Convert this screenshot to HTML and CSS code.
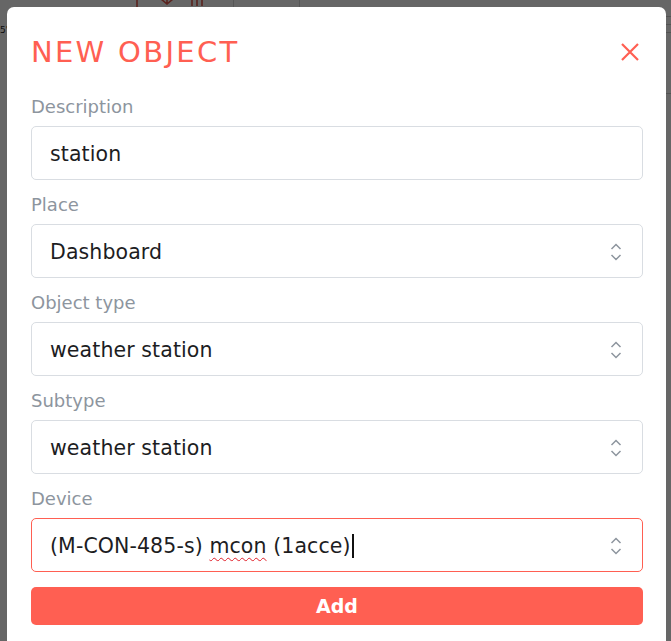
FILE: index.html
```html
<!DOCTYPE html>
<html lang="en">
<head>
<meta charset="utf-8">
<title>New object</title>
<link rel="stylesheet" href="styles.css">
</head>
<body>
<div class="page">
  <div class="toolbar">
    <div class="tb-icons">
      <svg width="14" height="16" viewBox="0 0 14 16"><path d="M7 0 V14 M1 5 L7 0 L13 5" stroke="#e0584c" stroke-width="1.6" fill="none"/></svg>
      <svg width="14" height="16" viewBox="0 0 14 16"><path d="M7 -2 V10 M1 5 L7 10 L13 5 M1 14 H13" stroke="#e0584c" stroke-width="1.6" fill="none"/></svg>
      <svg width="14" height="16" viewBox="0 0 14 16"><path d="M2 0 V12 M7 0 V12 M12 0 V12" stroke="#e0584c" stroke-width="1.6" fill="none"/></svg>
    </div>
    <div class="tb-cell"></div>
    <div class="tb-cell wide"></div>
  </div>
  <div class="side-text">5'</div>
  <div class="rows">
    <div class="row"></div>
    <div class="row"></div>
    <div class="row tall"></div>
  </div>
</div>

<div class="backdrop">
  <div class="modal">
    <div class="modal-header">
      <h1 class="modal-title">NEW OBJECT</h1>
      <button class="close" aria-label="Close">
        <svg width="20" height="20" viewBox="0 0 20 20"><path d="M2 2 L18 18 M18 2 L2 18" stroke="#ff5f52" stroke-width="2.2" fill="none"/></svg>
      </button>
    </div>

    <div class="field">
      <div class="label">Description</div>
      <div class="control"><span class="value">station</span></div>
    </div>

    <div class="field">
      <div class="label">Place</div>
      <div class="control"><span class="value">Dashboard</span>
        <svg class="chev" width="12" height="18" viewBox="0 0 12 18"><path d="M1.5 6 L6 1.5 L10.5 6 M1.5 12 L6 16.5 L10.5 12" stroke="#8d959e" stroke-width="1.5" fill="none"/></svg>
      </div>
    </div>

    <div class="field">
      <div class="label">Object type</div>
      <div class="control"><span class="value">weather station</span>
        <svg class="chev" width="12" height="18" viewBox="0 0 12 18"><path d="M1.5 6 L6 1.5 L10.5 6 M1.5 12 L6 16.5 L10.5 12" stroke="#8d959e" stroke-width="1.5" fill="none"/></svg>
      </div>
    </div>

    <div class="field">
      <div class="label">Subtype</div>
      <div class="control"><span class="value">weather station</span>
        <svg class="chev" width="12" height="18" viewBox="0 0 12 18"><path d="M1.5 6 L6 1.5 L10.5 6 M1.5 12 L6 16.5 L10.5 12" stroke="#8d959e" stroke-width="1.5" fill="none"/></svg>
      </div>
    </div>

    <div class="field">
      <div class="label">Device</div>
      <div class="control focused"><span class="value">(M-CON-485-s) <span class="misspelled">mcon</span> (1acce)<span class="caret"></span></span>
        <svg class="chev" width="12" height="18" viewBox="0 0 12 18"><path d="M1.5 6 L6 1.5 L10.5 6 M1.5 12 L6 16.5 L10.5 12" stroke="#8d959e" stroke-width="1.5" fill="none"/></svg>
      </div>
    </div>

    <button class="add">Add</button>
  </div>
</div>
</body>
</html>
```

FILE: styles.css
```css
html, body {
  margin: 0;
  padding: 0;
  overflow: hidden;
  height: 100%;
}
body {
  background: #ffffff;
  font-family: "DejaVu Sans", sans-serif;
}

/* underlying page (seen through the backdrop) */
.page {
  height: 100%;
}
.toolbar {
  display: flex;
  height: 40px;
  padding-left: 130px;
}
.tb-icons {
  display: flex;
  gap: 16px;
  width: 103px;
  margin-top: -6px;
}
.tb-cell {
  width: 65px;
  border-left: 1px solid #d8d8d8;
}
.tb-cell.wide {
  flex: 1;
}
.side-text {
  margin-left: 0;
  margin-top: -16px;
  font-size: 9px;
  line-height: 12px;
  color: #222;
}
.rows {
  margin-left: 666px;
  margin-top: -20px;
}
.row {
  height: 7px;
  border-top: 1px solid #d0d0d0;
}
.row.tall {
  height: 60px;
  border-bottom: 1px solid #d0d0d0;
}

/* overlay */
.backdrop {
  position: fixed;
  inset: 0;
  background: rgba(0, 0, 0, 0.6);
}
.modal {
  margin: 7px 0 0 7px;
  width: 659px;
  box-sizing: border-box;
  padding: 27px 23px 30px 24px;
  background: #ffffff;
  border-radius: 7px;
}
.modal-header {
  display: flex;
  align-items: center;
  justify-content: space-between;
  height: 36px;
  margin-bottom: 26px;
}
.modal-title {
  margin: 0;
  font-weight: normal;
  font-size: 29px;
  line-height: 36px;
  letter-spacing: 2.3px;
  color: #ff5f52;
}
.close {
  border: 0;
  background: none;
  padding: 0;
  margin-right: 3px;
  width: 20px;
  height: 20px;
  display: flex;
}

.field {
  margin-bottom: 14px;
}
.label {
  font-size: 18px;
  line-height: 22px;
  color: #8d959e;
  margin-bottom: 8px;
}
.control {
  display: flex;
  align-items: center;
  justify-content: space-between;
  height: 54px;
  box-sizing: border-box;
  border: 1px solid #d9dde2;
  border-radius: 5px;
  padding: 1px 20px 0 18px;
  font-size: 20.5px;
  color: #1d1d1f;
}
.control.focused {
  border-color: #ff5f52;
}
.value {
  display: flex;
  align-items: center;
  white-space: pre;
  letter-spacing: 0.1px;
}
.misspelled {
  text-decoration: underline wavy #e0202a;
  text-decoration-thickness: 1px;
  text-underline-offset: 4px;
}
.caret {
  display: inline-block;
  width: 0;
  height: 24px;
  border-left: 2px solid #111;
  margin-left: 1px;
}
.chev {
  display: block;
}

.add {
  display: block;
  width: 100%;
  height: 38px;
  margin-top: 15px;
  border: 0;
  border-radius: 5px;
  background: #ff5f52;
  color: #ffffff;
  font-family: "DejaVu Sans", sans-serif;
  font-weight: bold;
  font-size: 19px;
  padding: 0;
}
```
